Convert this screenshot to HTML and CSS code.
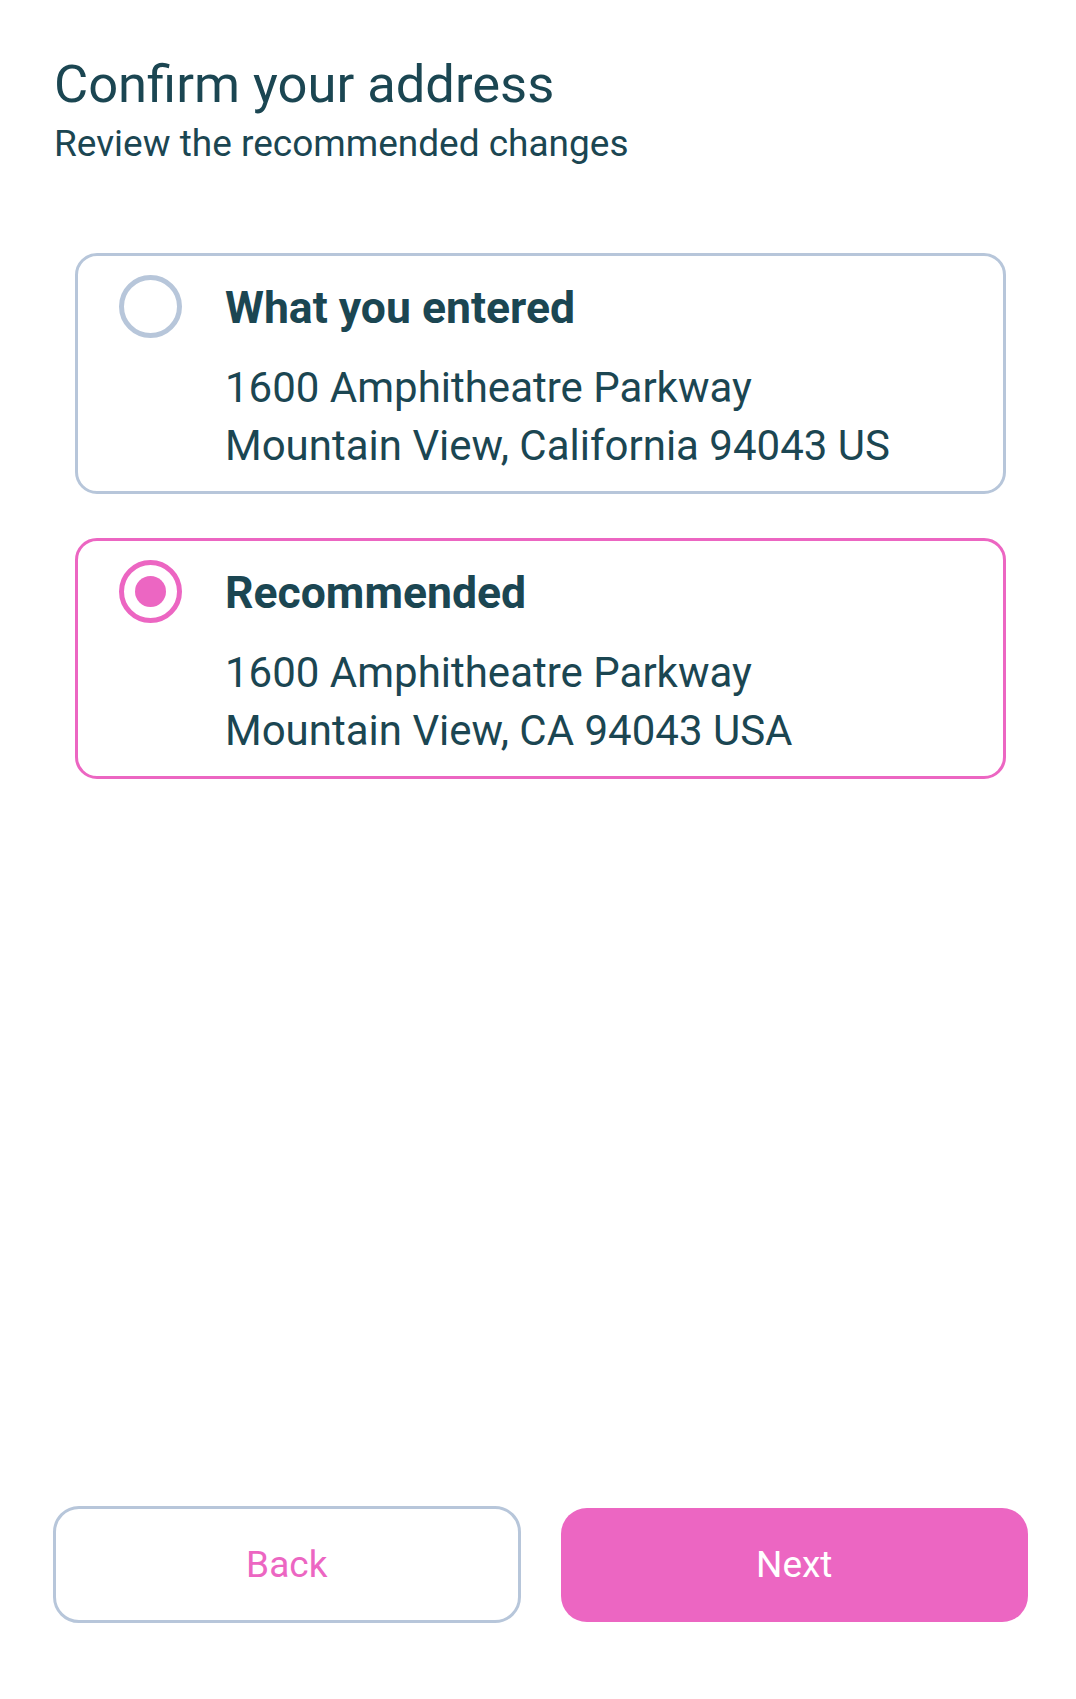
FILE: index.html
```html
<!DOCTYPE html>
<html lang="en">
<head>
<meta charset="utf-8">
<title>Confirm your address</title>
<link rel="stylesheet" href="styles.css">
</head>
<body>
<div class="screen">
  <header class="header">
    <h1 class="title">Confirm your address</h1>
    <p class="subtitle">Review the recommended changes</p>
  </header>

  <div class="options">
    <div class="card">
      <div class="card-head">
        <span class="radio"></span>
        <span class="card-title">What you entered</span>
      </div>
      <div class="address">
        <div>1600 Amphitheatre Parkway</div>
        <div>Mountain View, California 94043 US</div>
      </div>
    </div>

    <div class="card card-selected">
      <div class="card-head">
        <span class="radio radio-checked"><span class="radio-dot"></span></span>
        <span class="card-title">Recommended</span>
      </div>
      <div class="address">
        <div>1600 Amphitheatre Parkway</div>
        <div>Mountain View, CA 94043 USA</div>
      </div>
    </div>
  </div>

  <div class="actions">
    <button class="btn btn-outline">Back</button>
    <button class="btn btn-filled">Next</button>
  </div>
</div>
</body>
</html>
```

FILE: styles.css
```css
* { box-sizing: border-box; }

html, body {
  margin: 0;
  padding: 0;
  background: #ffffff;
}

body {
  font-family: Roboto, "Noto Sans", "Liberation Sans", sans-serif;
  color: #1b4652;
}

.screen {
  min-height: 1699px;
  display: flex;
  flex-direction: column;
}

.header {
  padding: 53px 0 0 54px;
}

.title {
  margin: 0;
  font-size: 52.5px;
  line-height: 62px;
  font-weight: 400;
}

.subtitle {
  margin: 7px 0 0 0;
  font-size: 37px;
  line-height: 43px;
  font-weight: 400;
}

.options {
  margin: 88px 70px 0 75px;
  display: flex;
  flex-direction: column;
  gap: 44px;
}

.card {
  border: 3px solid #b7c6da;
  border-radius: 22px;
  padding: 19px 20px 16px 41px;
}

.card-selected {
  border-color: #ec66c2;
}

.card-head {
  display: flex;
  align-items: center;
  gap: 43px;
}

.radio {
  flex: none;
  width: 63px;
  height: 63px;
  border-radius: 50%;
  border: 5px solid #b7c6da;
  display: flex;
  align-items: center;
  justify-content: center;
}

.radio-checked {
  border-color: #ec66c2;
}

.radio-dot {
  width: 31px;
  height: 31px;
  border-radius: 50%;
  background: #ec66c2;
}

.card-title {
  font-size: 44.5px;
  font-weight: 700;
  line-height: 52px;
  padding-top: 3px;
}

.address {
  margin: 21px 0 0 106px;
  font-size: 42px;
  line-height: 58px;
}

.actions {
  margin-top: auto;
  padding: 0 48px 76px 53px;
  display: grid;
  grid-template-columns: 1fr 1fr;
  align-items: center;
  column-gap: 40px;
}

.btn {
  width: 100%;
  font-family: Roboto, "Noto Sans", "Liberation Sans", sans-serif;
  font-size: 37px;
  font-weight: 400;
  border-radius: 26px;
  padding: 0;
  cursor: pointer;
}

.btn-outline {
  height: 117px;
  background: #ffffff;
  border: 3px solid #b7c6da;
  color: #ec66c2;
}

.btn-filled {
  height: 114px;
  background: #ec66c2;
  border: none;
  color: #ffffff;
}
```
